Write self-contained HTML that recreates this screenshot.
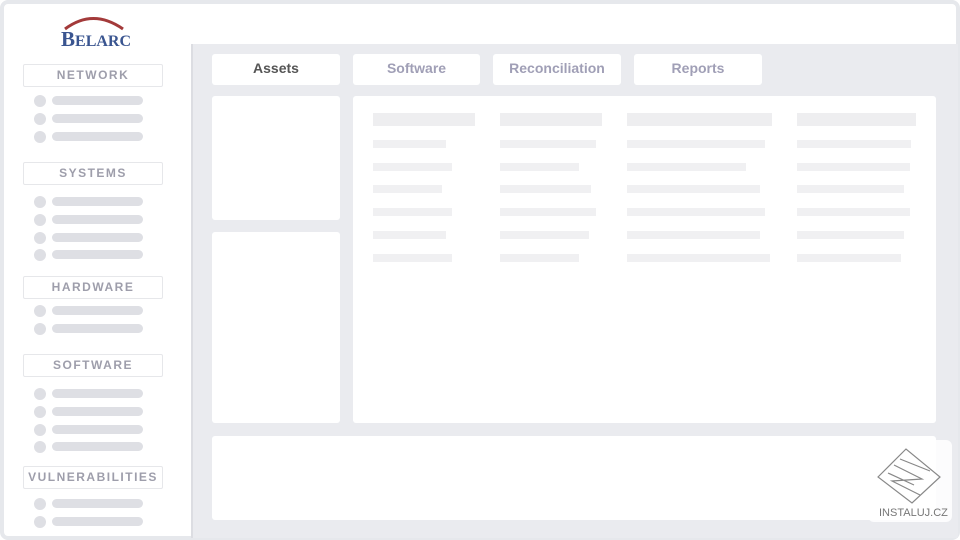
<!DOCTYPE html><html><head><style>
body{margin:0;width:960px;height:540px;background:#fff;font-family:"Liberation Sans",sans-serif;position:relative;overflow:hidden}
.a{position:absolute}
.frame{left:0;top:0;width:952px;height:532px;border:4px solid #e6e8ec;border-radius:8px;background:#fff}
.main{left:191px;top:44px;width:765px;height:494px;background:#eaebef;border-left:2px solid #dcdde2}
.w{background:#fff;border-radius:3px}
.tab{top:54px;height:31px;background:#fff;border-radius:3px;font-weight:bold;font-size:14px;color:#a09fb6;text-align:center;line-height:28px}
.hb{left:23px;width:138px;height:21px;border:1px solid #e6e7ea;border-radius:2px;text-align:center;font-weight:bold;font-size:12px;letter-spacing:1.5px;color:#9e9eab;line-height:21px}
.d{left:34px;width:12px;height:12px;border-radius:50%;background:#dedfe4}
.b{left:52px;width:91px;height:9px;border-radius:5px;background:#dedfe4}
.r{background:#f0f0f2;height:8px}
.h{background:#eeeef0;height:13px}
</style></head><body>
<div class="a frame"></div>
<div class="a main"></div>
<svg class="a" style="left:60px;top:12px" width="70" height="40"><path d="M5 17 Q33 -4 63 17" stroke="#a33a3a" stroke-width="3" fill="none"/><text x="1" y="34" font-family="Liberation Serif" font-weight="bold" font-size="21" fill="#3a5590">B<tspan font-size="16">ELARC</tspan></text></svg>
<div class="a tab" style="left:212px;width:128px;color:#555;">Assets</div>
<div class="a tab" style="left:353px;width:127px">Software</div>
<div class="a tab" style="left:493px;width:128px">Reconciliation</div>
<div class="a tab" style="left:634px;width:128px">Reports</div>
<div class="a w" style="left:212px;top:96px;width:128px;height:124px"></div>
<div class="a w" style="left:212px;top:232px;width:128px;height:191px"></div>
<div class="a w" style="left:353px;top:96px;width:583px;height:327px"></div>
<div class="a w" style="left:212px;top:436px;width:724px;height:84px"></div>
<div class="a h" style="left:373px;top:113px;width:102px"></div>
<div class="a h" style="left:500px;top:113px;width:102px"></div>
<div class="a h" style="left:627px;top:113px;width:145px"></div>
<div class="a h" style="left:797px;top:113px;width:119px"></div>
<div class="a r" style="left:373px;top:140px;width:73px"></div><div class="a r" style="left:500px;top:140px;width:96px"></div><div class="a r" style="left:627px;top:140px;width:138px"></div><div class="a r" style="left:797px;top:140px;width:114px"></div>
<div class="a r" style="left:373px;top:163px;width:79px"></div><div class="a r" style="left:500px;top:163px;width:79px"></div><div class="a r" style="left:627px;top:163px;width:119px"></div><div class="a r" style="left:797px;top:163px;width:113px"></div>
<div class="a r" style="left:373px;top:185px;width:69px"></div><div class="a r" style="left:500px;top:185px;width:91px"></div><div class="a r" style="left:627px;top:185px;width:133px"></div><div class="a r" style="left:797px;top:185px;width:107px"></div>
<div class="a r" style="left:373px;top:208px;width:79px"></div><div class="a r" style="left:500px;top:208px;width:96px"></div><div class="a r" style="left:627px;top:208px;width:138px"></div><div class="a r" style="left:797px;top:208px;width:113px"></div>
<div class="a r" style="left:373px;top:231px;width:73px"></div><div class="a r" style="left:500px;top:231px;width:89px"></div><div class="a r" style="left:627px;top:231px;width:133px"></div><div class="a r" style="left:797px;top:231px;width:107px"></div>
<div class="a r" style="left:373px;top:254px;width:79px"></div><div class="a r" style="left:500px;top:254px;width:79px"></div><div class="a r" style="left:627px;top:254px;width:143px"></div><div class="a r" style="left:797px;top:254px;width:104px"></div>
<div class="a hb" style="top:64px">NETWORK</div>
<div class="a d" style="top:95px"></div><div class="a b" style="top:96px"></div>
<div class="a d" style="top:113px"></div><div class="a b" style="top:114px"></div>
<div class="a d" style="top:131px"></div><div class="a b" style="top:132px"></div>
<div class="a hb" style="top:162px">SYSTEMS</div>
<div class="a d" style="top:196px"></div><div class="a b" style="top:197px"></div>
<div class="a d" style="top:214px"></div><div class="a b" style="top:215px"></div>
<div class="a d" style="top:232px"></div><div class="a b" style="top:233px"></div>
<div class="a d" style="top:249px"></div><div class="a b" style="top:250px"></div>
<div class="a hb" style="top:276px">HARDWARE</div>
<div class="a d" style="top:305px"></div><div class="a b" style="top:306px"></div>
<div class="a d" style="top:323px"></div><div class="a b" style="top:324px"></div>
<div class="a hb" style="top:354px">SOFTWARE</div>
<div class="a d" style="top:388px"></div><div class="a b" style="top:389px"></div>
<div class="a d" style="top:406px"></div><div class="a b" style="top:407px"></div>
<div class="a d" style="top:424px"></div><div class="a b" style="top:425px"></div>
<div class="a d" style="top:441px"></div><div class="a b" style="top:442px"></div>
<div class="a hb" style="top:466px">VULNERABILITIES</div>
<div class="a d" style="top:498px"></div><div class="a b" style="top:499px"></div>
<div class="a d" style="top:516px"></div><div class="a b" style="top:517px"></div>
<div class="a" style="left:868px;top:440px;width:84px;height:82px;background:rgba(255,255,255,.85);border-radius:6px"></div>
<svg class="a" style="left:874px;top:445px" width="70" height="62" fill="none" stroke="#888" stroke-width="1.2"><path d="M4 32 L32 4 L66 32 L38 58 Z"/><path d="M20 20 L48 34 L18 36 L46 50 M26 14 L56 26 M14 28 L40 40"/></svg>
<div class="a" style="left:879px;top:507px;font-size:11px;color:#777">INSTALUJ.CZ</div>
</body></html>
